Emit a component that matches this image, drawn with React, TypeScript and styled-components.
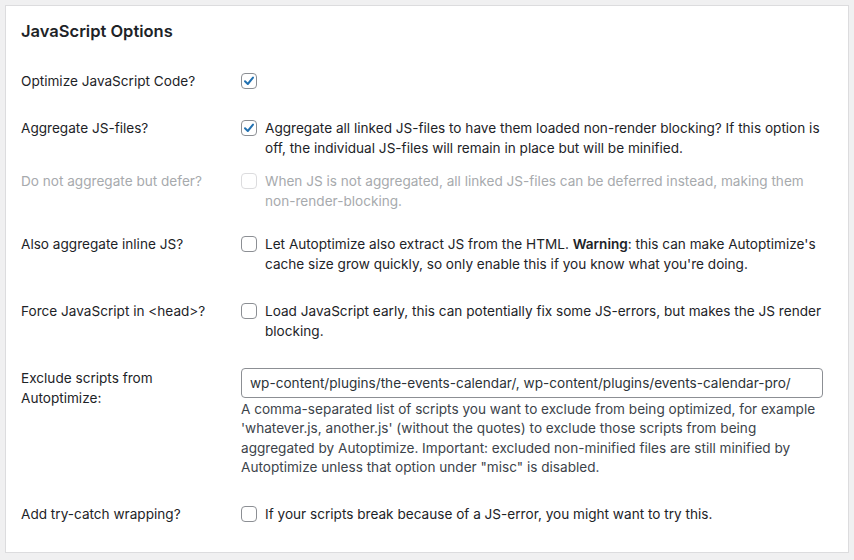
import React from "react";
import styled, { createGlobalStyle } from "styled-components";

const GlobalStyle = createGlobalStyle`
    html, body {
        margin: 0;
        padding: 0;
        background: #f0f0f1;
    }
    body {
        font-family: Inter, "Noto Sans", sans-serif;
        font-size: 13.6px;
        color: #1d2327;
    }
`;

const rows = [
    {
        label: "Optimize JavaScript Code?",
        checked: true,
    },
    {
        label: "Aggregate JS-files?",
        checked: true,
        text: "Aggregate all linked JS-files to have them loaded non-render blocking? If this option is off, the individual JS-files will remain in place but will be minified.",
    },
    {
        label: "Do not aggregate but defer?",
        disabled: true,
        compact: true,
        text: "When JS is not aggregated, all linked JS-files can be deferred instead, making them non-render-blocking.",
    },
    {
        label: "Also aggregate inline JS?",
        text: (
            <>
                Let Autoptimize also extract JS from the HTML. <strong>Warning</strong>: this can make
                Autoptimize's cache size grow quickly, so only enable this if you know what you're doing.
            </>
        ),
    },
    {
        label: "Force JavaScript in <head>?",
        text: "Load JavaScript early, this can potentially fix some JS-errors, but makes the JS render blocking.",
    },
];

const CheckBox = ({ checked, disabled }: { checked?: boolean; disabled?: boolean }) => (
    <Box $disabled={disabled}>
        {checked && (
            <svg width="12" height="12" viewBox="0 0 12 12">
                <path
                    d="M2 6.3 L4.8 9 L10 2.6"
                    fill="none"
                    stroke="#2271b1"
                    strokeWidth="2"
                    strokeLinecap="round"
                    strokeLinejoin="round"
                />
            </svg>
        )}
    </Box>
);

export default function App() {
    return (
        <>
            <GlobalStyle />
            <Page>
                <Panel>
                    <Title>JavaScript Options</Title>
                    <Table>
                        {rows.map((row, index) => (
                            <Row key={index} $compact={row.compact}>
                                <Label $disabled={row.disabled}>{row.label}</Label>
                                <Field>
                                    <CheckLine>
                                        <CheckBox checked={row.checked} disabled={row.disabled} />
                                        {row.text && (
                                            <CheckText $disabled={row.disabled}>{row.text}</CheckText>
                                        )}
                                    </CheckLine>
                                </Field>
                            </Row>
                        ))}
                        <Row>
                            <Label>
                                Exclude scripts from
                                <br />
                                Autoptimize:
                            </Label>
                            <Field>
                                <TextInput
                                    type="text"
                                    defaultValue="wp-content/plugins/the-events-calendar/, wp-content/plugins/events-calendar-pro/"
                                />
                                <Description>
                                    A comma-separated list of scripts you want to exclude from being optimized, for
                                    example 'whatever.js, another.js' (without the quotes) to exclude those scripts
                                    from being aggregated by Autoptimize. Important: excluded non-minified files are
                                    still minified by Autoptimize unless that option under "misc" is disabled.
                                </Description>
                            </Field>
                        </Row>
                        <Row>
                            <Label>Add try-catch wrapping?</Label>
                            <Field>
                                <CheckLine>
                                    <CheckBox />
                                    <CheckText>
                                        If your scripts break because of a JS-error, you might want to try this.
                                    </CheckText>
                                </CheckLine>
                            </Field>
                        </Row>
                    </Table>
                </Panel>
            </Page>
        </>
    );
}

const Page = styled.div`
    padding: 5px 5px 7px 5px;
    width: 854px;
    height: 560px;
    box-sizing: border-box;
`;

const Panel = styled.div`
    background: #fff;
    border: 1px solid #dcdcde;
    padding: 14px 15px 14px 15px;
    height: 100%;
    box-sizing: border-box;
`;

const Title = styled.h2`
    margin: 0;
    font-size: 16.5px;
    font-weight: 600;
    line-height: 22px;
    color: #1d2327;
`;

const Table = styled.div`
    display: flex;
    flex-direction: column;
    margin-top: 15px;
`;

const Row = styled.div<{ $compact?: boolean }>`
    display: grid;
    grid-template-columns: 220px 1fr;
    padding: ${(p) => (p.$compact ? "0 0 9px" : "14px 0 13px")};
    line-height: 20px;
`;

const Label = styled.div<{ $disabled?: boolean }>`
    color: ${(p) => (p.$disabled ? "#a7aaad" : "#1d2327")};
`;

const Field = styled.div`
    display: flex;
    flex-direction: column;
    padding-right: 6px;
`;

const CheckLine = styled.div`
    display: flex;
    align-items: flex-start;
    gap: 8px;
`;

const Box = styled.span<{ $disabled?: boolean }>`
    flex: none;
    width: 16px;
    height: 16px;
    margin-top: 2px;
    box-sizing: border-box;
    border: 1px solid ${(p) => (p.$disabled ? "#dcdcde" : "#8c8f94")};
    border-radius: 4px;
    background: #fff;
    display: flex;
    align-items: center;
    justify-content: center;
`;

const CheckText = styled.span<{ $disabled?: boolean }>`
    color: ${(p) => (p.$disabled ? "#a7aaad" : "#1d2327")};
    strong {
        font-weight: 600;
    }
`;

const TextInput = styled.input`
    width: 582px;
    height: 30px;
    box-sizing: border-box;
    border: 1px solid #8c8f94;
    border-radius: 4px;
    padding: 0 8px;
    font-family: inherit;
    font-size: 13.6px;
    color: #2c3338;
    outline: none;
`;

const Description = styled.p`
    margin: 2px 0 0;
    padding-right: 8px;
    line-height: 19.3px;
    color: #3c434a;
`;
